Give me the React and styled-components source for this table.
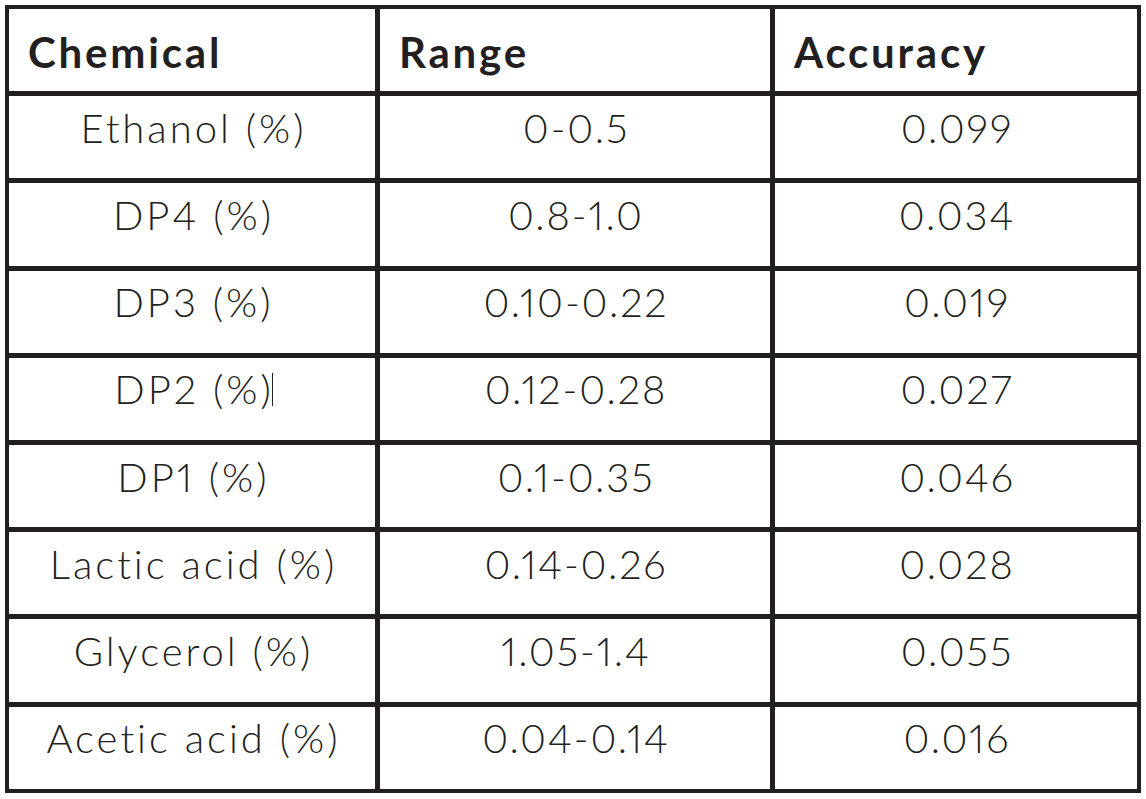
import React from "react";
import styled, { createGlobalStyle } from "styled-components";

const GlobalStyle = createGlobalStyle`
  html, body {
    margin: 0;
    padding: 0;
    background: #ffffff;
  }
  body {
    font-family: Lato, "Liberation Sans", sans-serif;
    color: #231f20;
  }
`;

const Page = styled.div`
  padding: 5px 0 0 5px;
  width: 1136px;
`;

const Grid = styled.div`
  display: grid;
  grid-template-columns: 366px 390px 362px;
  grid-auto-rows: 82.2px;
  gap: 5px;
  padding: 4px;
  background: #231f20;
`;

const HeaderCell = styled.div`
  background: #ffffff;
  display: flex;
  align-items: center;
  padding: 4px 0 0 19px;
  font-family: Lato, "Liberation Sans", sans-serif;
  font-weight: 700;
  font-size: 42px;
  letter-spacing: 2.8px;
  color: #231f20;
`;

const Cell = styled.div`
  background: #ffffff;
  display: flex;
  align-items: center;
  justify-content: center;
  padding: 0 0 19px ${(p) => (p.$numeric ? "2px" : "3px")};
  font-family: Lato, "Liberation Sans", sans-serif;
  font-weight: 300;
  font-size: 40px;
  letter-spacing: ${(p) => (p.$numeric ? "1.9px" : "3px")};
  font-variant-numeric: proportional-nums;
  font-feature-settings: "pnum" 1;
  color: #231f20;
  white-space: nowrap;
`;

const Caret = styled.span`
  display: inline-block;
  width: 1px;
  height: 33px;
  margin-left: -2px;
  background: #231f20;
  align-self: center;
`;

const rows = [
  ["Ethanol (%)", "0-0.5", "0.099"],
  ["DP4 (%)", "0.8-1.0", "0.034"],
  ["DP3 (%)", "0.10-0.22", "0.019"],
  ["DP2 (%)", "0.12-0.28", "0.027", true],
  ["DP1 (%)", "0.1-0.35", "0.046"],
  ["Lactic acid (%)", "0.14-0.26", "0.028"],
  ["Glycerol (%)", "1.05-1.4", "0.055"],
  ["Acetic acid (%)", "0.04-0.14", "0.016"],
];

export default function App() {
  return (
    <>
      <GlobalStyle />
      <Page>
        <Grid>
          <HeaderCell>Chemical</HeaderCell>
          <HeaderCell>Range</HeaderCell>
          <HeaderCell>Accuracy</HeaderCell>
          {rows.map(([name, range, acc, caret]) => (
            <React.Fragment key={name}>
              <Cell>
                {name}
                {caret && <Caret />}
              </Cell>
              <Cell $numeric>{range}</Cell>
              <Cell $numeric>{acc}</Cell>
            </React.Fragment>
          ))}
        </Grid>
      </Page>
    </>
  );
}
